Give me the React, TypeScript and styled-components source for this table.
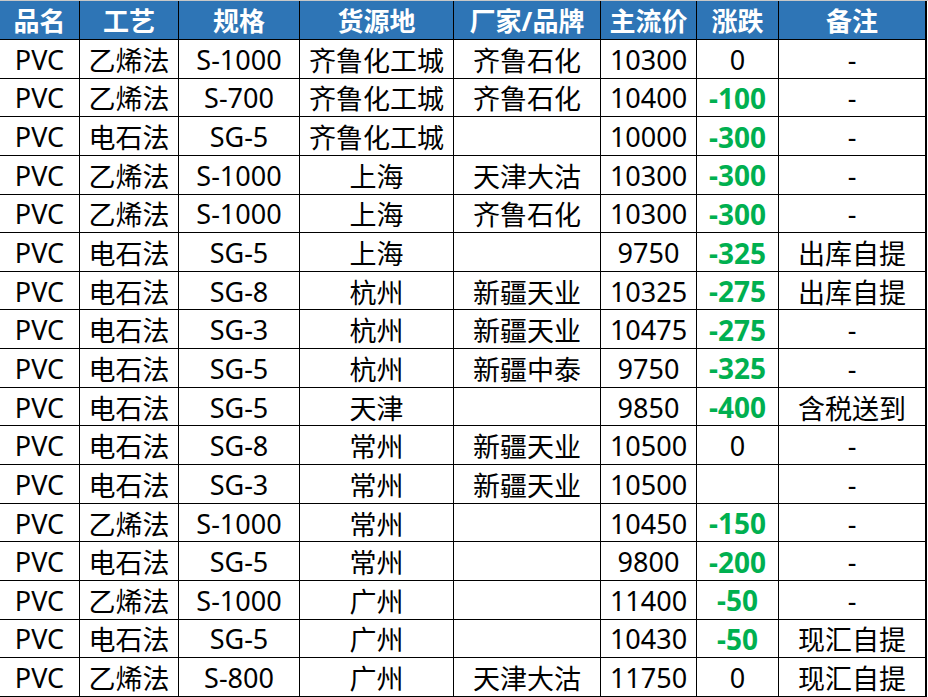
import styled, { createGlobalStyle } from 'styled-components';

interface PriceRow {
  name: string;
  process: string;
  spec: string;
  origin: string;
  brand: string;
  price: string;
  change: string;
  note: string;
}

const headers = ['品名', '工艺', '规格', '货源地', '厂家/品牌', '主流价', '涨跌', '备注'];

const rows: PriceRow[] = [
  { name: 'PVC', process: '乙烯法', spec: 'S-1000', origin: '齐鲁化工城', brand: '齐鲁石化', price: '10300', change: '0', note: '-' },
  { name: 'PVC', process: '乙烯法', spec: 'S-700', origin: '齐鲁化工城', brand: '齐鲁石化', price: '10400', change: '-100', note: '-' },
  { name: 'PVC', process: '电石法', spec: 'SG-5', origin: '齐鲁化工城', brand: '', price: '10000', change: '-300', note: '-' },
  { name: 'PVC', process: '乙烯法', spec: 'S-1000', origin: '上海', brand: '天津大沽', price: '10300', change: '-300', note: '-' },
  { name: 'PVC', process: '乙烯法', spec: 'S-1000', origin: '上海', brand: '齐鲁石化', price: '10300', change: '-300', note: '-' },
  { name: 'PVC', process: '电石法', spec: 'SG-5', origin: '上海', brand: '', price: '9750', change: '-325', note: '出库自提' },
  { name: 'PVC', process: '电石法', spec: 'SG-8', origin: '杭州', brand: '新疆天业', price: '10325', change: '-275', note: '出库自提' },
  { name: 'PVC', process: '电石法', spec: 'SG-3', origin: '杭州', brand: '新疆天业', price: '10475', change: '-275', note: '-' },
  { name: 'PVC', process: '电石法', spec: 'SG-5', origin: '杭州', brand: '新疆中泰', price: '9750', change: '-325', note: '-' },
  { name: 'PVC', process: '电石法', spec: 'SG-5', origin: '天津', brand: '', price: '9850', change: '-400', note: '含税送到' },
  { name: 'PVC', process: '电石法', spec: 'SG-8', origin: '常州', brand: '新疆天业', price: '10500', change: '0', note: '-' },
  { name: 'PVC', process: '电石法', spec: 'SG-3', origin: '常州', brand: '新疆天业', price: '10500', change: '', note: '-' },
  { name: 'PVC', process: '乙烯法', spec: 'S-1000', origin: '常州', brand: '', price: '10450', change: '-150', note: '-' },
  { name: 'PVC', process: '电石法', spec: 'SG-5', origin: '常州', brand: '', price: '9800', change: '-200', note: '-' },
  { name: 'PVC', process: '乙烯法', spec: 'S-1000', origin: '广州', brand: '', price: '11400', change: '-50', note: '-' },
  { name: 'PVC', process: '电石法', spec: 'SG-5', origin: '广州', brand: '', price: '10430', change: '-50', note: '现汇自提' },
  { name: 'PVC', process: '乙烯法', spec: 'S-800', origin: '广州', brand: '天津大沽', price: '11750', change: '0', note: '现汇自提' },
];

const GlobalStyle = createGlobalStyle`
  body {
    margin: 0;
    background: #ffffff;
    font-family: "Noto Sans", "Noto Sans CJK SC", sans-serif;
  }
`;

const Table = styled.div`
  display: grid;
  grid-template-columns: 80px 99px 121px 154px 147px 96px 82px 148px;
  grid-template-rows: 39px;
  grid-auto-rows: 38.65px;
  width: 928px;
  border-top: 1px solid #c8c8c8;
  box-sizing: border-box;
`;

const HeadCell = styled.div<{ $last?: boolean }>`
  display: flex;
  align-items: center;
  justify-content: center;
  background: #2e75b6;
  color: #ffffff;
  font-weight: 700;
  font-size: 26px;
  border-right: ${({ $last }) => ($last ? '2px' : '1px')} solid #000000;
  border-bottom: 1px solid #000000;
  box-sizing: border-box;
  white-space: nowrap;
  overflow: hidden;
`;

const Cell = styled.div<{ $last?: boolean; $down?: boolean }>`
  display: flex;
  align-items: center;
  justify-content: center;
  padding-top: 1px;
  color: ${({ $down }) => ($down ? '#00b050' : '#000000')};
  font-weight: ${({ $down }) => ($down ? 700 : 400)};
  font-size: ${({ $down }) => ($down ? '28px' : '27px')};
  border-right: ${({ $last }) => ($last ? '2px' : '1px')} solid #000000;
  border-bottom: 1px solid #000000;
  box-sizing: border-box;
  white-space: nowrap;
  overflow: hidden;
`;

export default function App() {
  return (
    <>
      <GlobalStyle />
      <Table>
        {headers.map((h, i) => (
          <HeadCell key={h} $last={i === headers.length - 1}>
            {h}
          </HeadCell>
        ))}
        {rows.map((r, idx) => (
          <Row key={idx} row={r} />
        ))}
      </Table>
    </>
  );
}

function Row({ row }: { row: PriceRow }) {
  const down = row.change.startsWith('-');
  return (
    <>
      <Cell>{row.name}</Cell>
      <Cell>{row.process}</Cell>
      <Cell>{row.spec}</Cell>
      <Cell>{row.origin}</Cell>
      <Cell>{row.brand}</Cell>
      <Cell>{row.price}</Cell>
      <Cell $down={down}>{row.change}</Cell>
      <Cell $last>{row.note}</Cell>
    </>
  );
}
